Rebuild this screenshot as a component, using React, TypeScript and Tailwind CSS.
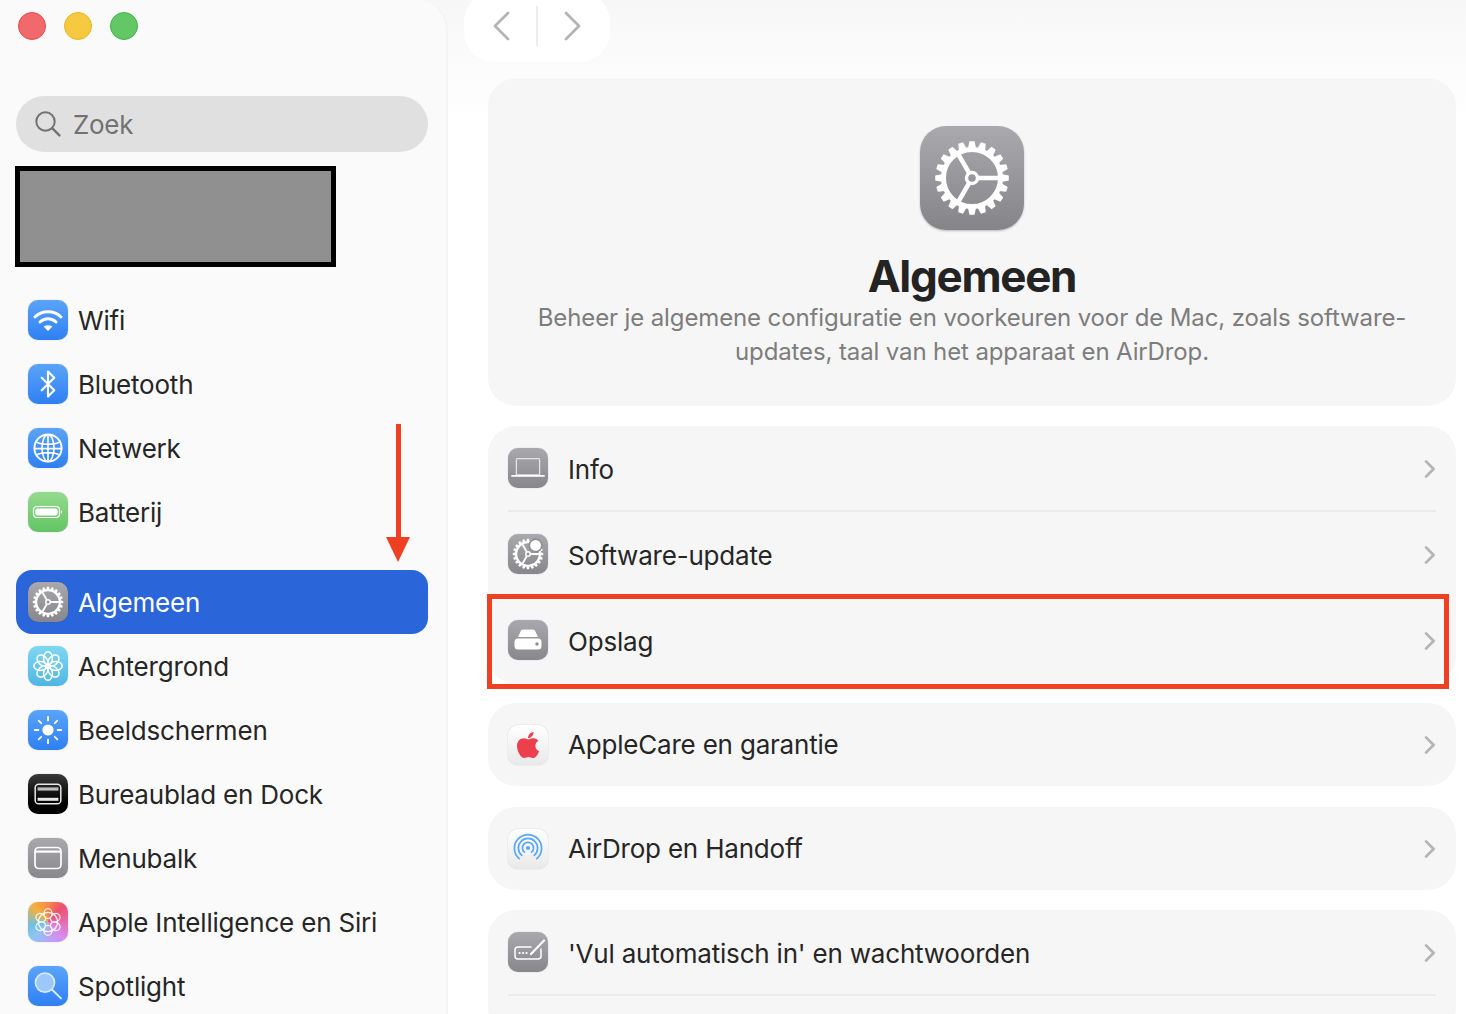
import { ReactNode } from "react";
import { Bluetooth } from "lucide-react";
import { FaApple } from "react-icons/fa";

function Gear({ size, dot = false }: { size: number; dot?: boolean }) {
  const teeth = Array.from({ length: 20 }, (_, i) => i * 18);
  return (
    <svg width={size} height={size} viewBox="0 0 40 40" fill="none" stroke="white">
      {teeth.map((a) => (
        <path key={a} d="M18.9 4 L21.1 4 L22 8.2 L18 8.2 Z" fill="white" stroke="none" transform={`rotate(${a} 20 20)`} />
      ))}
      <circle cx="20" cy="20" r="12.4" strokeWidth="2.2" />
      <circle cx="20" cy="20" r="2.4" strokeWidth="1.5" />
      <path d="M22.4 20H32.4M18.8 17.9 13.8 9.3M18.8 22.1 13.8 30.7" strokeWidth="2" />
      {dot && <circle cx="28" cy="11" r="6.6" fill="white" stroke="#8f8f94" strokeWidth="1.8" />}
    </svg>
  );
}

function Chevron({ dir, className }: { dir: "left" | "right"; className?: string }) {
  return (
    <svg width="14" height="20" viewBox="0 0 14 20" fill="none" stroke="currentColor" strokeWidth="2.7" strokeLinecap="round" strokeLinejoin="round" className={className}>
      <path d={dir === "right" ? "M3 2.4 10.6 10 3 17.6" : "M11 2.4 3.4 10 11 17.6"} />
    </svg>
  );
}

function NavChevron({ dir }: { dir: "left" | "right" }) {
  return (
    <svg width="18" height="30" viewBox="0 0 18 30" fill="none" stroke="currentColor" strokeWidth="2.8" strokeLinecap="round" strokeLinejoin="round">
      <path d={dir === "right" ? "M3 2 16 15 3 28" : "M15 2 2 15 15 28"} />
    </svg>
  );
}

function Tile({ className, children }: { className: string; children: ReactNode }) {
  return (
    <div className={`flex h-10 w-10 shrink-0 items-center justify-center rounded-[10px] shadow-[0_0_1px_rgba(0,0,0,0.35)] ${className}`}>
      {children}
    </div>
  );
}

const blue = "bg-gradient-to-b from-[#5aa4f8] to-[#2f7ff5]";
const gray = "bg-gradient-to-b from-[#a8a8ad] to-[#87878c]";
const pale = "bg-gradient-to-b from-white to-[#e9e9e9]";

const WifiTile = () => (
  <Tile className={blue}>
    <svg width="40" height="40" viewBox="0 0 40 40" fill="none" stroke="white" strokeWidth="3" strokeLinecap="round">
      <path d="M7 17C13.5 10 26.5 10 33 17" />
      <path d="M12 22C16.5 17.6 23.5 17.6 28 22" />
      <path d="M20 31 15.6 26.6C18.2 24.8 21.8 24.8 24.4 26.6Z" fill="white" stroke="none" />
    </svg>
  </Tile>
);

const BluetoothTile = () => (
  <Tile className={blue}>
    <Bluetooth size={30} color="white" strokeWidth={1.7} />
  </Tile>
);

const GlobeTile = () => (
  <Tile className={blue}>
    <svg width="32" height="32" viewBox="0 0 32 32" fill="none" stroke="white" strokeWidth="1.6">
      <circle cx="16" cy="16" r="13.6" strokeWidth="2" />
      <ellipse cx="16" cy="16" rx="6" ry="13.4" />
      <path d="M16 2.6V29.4M4 10C10 13 22 13 28 10M2.6 16.6H29.4M4.4 23C10 19.8 22 19.8 27.6 23" />
    </svg>
  </Tile>
);

const BatteryTile = () => (
  <Tile className="bg-gradient-to-b from-[#96da8f] to-[#62c464]">
    <svg width="32" height="32" viewBox="0 0 32 32" fill="none">
      <rect x="1.5" y="10.5" width="26" height="11" rx="3.4" stroke="white" strokeWidth="1.2" />
      <rect x="3.4" y="12.4" width="22.2" height="7.2" rx="1.8" fill="white" />
      <path d="M29.2 14V18C30.4 17.6 30.4 14.4 29.2 14Z" fill="white" />
    </svg>
  </Tile>
);

const GearTile = ({ dot = false }: { dot?: boolean }) => (
  <Tile className={gray}>
    <Gear size={38} dot={dot} />
  </Tile>
);

const FlowerTile = () => (
  <Tile className="bg-gradient-to-b from-[#7fd7f3] to-[#4fb6e2]">
    <svg width="34" height="34" viewBox="0 0 34 34" fill="none" stroke="white" strokeWidth="1.5">
      {[0, 45, 90, 135, 180, 225, 270, 315].map((a) => (
        <ellipse key={a} cx="17" cy="9.2" rx="4.4" ry="6.4" transform={`rotate(${a} 17 17)`} />
      ))}
      <circle cx="17" cy="17" r="2.2" fill="white" stroke="none" />
    </svg>
  </Tile>
);

const SunTile = () => (
  <Tile className={blue}>
    <svg width="34" height="34" viewBox="0 0 34 34" fill="white" stroke="white" strokeWidth="1.8" strokeLinecap="round">
      <circle cx="17" cy="17" r="5.6" stroke="none" />
      {[0, 45, 90, 135, 180, 225, 270, 315].map((a) => (
        <path key={a} d="M17 3.8V7.4" transform={`rotate(${a} 17 17)`} />
      ))}
    </svg>
  </Tile>
);

const DockTile = () => (
  <Tile className="bg-gradient-to-b from-[#3a3a3a] to-black">
    <svg width="30" height="30" viewBox="0 0 30 30" fill="none">
      <rect x="2.2" y="5.2" width="25.6" height="19.6" rx="3.4" stroke="#e8e8e8" strokeWidth="1.5" />
      <path d="M4.6 8.4H25.4V11.6H4.6Z" fill="#bdbdbd" />
      <path d="M4.6 18.8H25.4V21.8H4.6Z" fill="#e8e8e8" />
    </svg>
  </Tile>
);

const MenuTile = () => (
  <Tile className={gray}>
    <svg width="30" height="30" viewBox="0 0 30 30" fill="none" stroke="white" strokeWidth="1.7">
      <rect x="2" y="4.5" width="26" height="21" rx="3.8" />
      <path d="M2.6 8.6H27.4" strokeWidth="2.2" />
    </svg>
  </Tile>
);

const SiriTile = () => (
  <Tile className="bg-[conic-gradient(from_0deg,#f58a4a,#ee4f6e_12%,#d88cf0_38%,#8fc4f5_62%,#6fc0e0_72%,#f5b13c_88%,#f58a4a)]">
    <svg width="34" height="34" viewBox="0 0 34 34" fill="none" stroke="white" strokeWidth="1.3" opacity="0.9">
      <circle cx="17" cy="17" r="9.6" />
      {[0, 60, 120, 180, 240, 300].map((a) => (
        <ellipse key={a} cx="17" cy="8.6" rx="4" ry="5" transform={`rotate(${a} 17 17)`} />
      ))}
    </svg>
  </Tile>
);

const SpotlightTile = () => (
  <Tile className={blue}>
    <svg width="34" height="34" viewBox="0 0 34 34" fill="none" stroke="#d9ebff" strokeWidth="1.6" strokeLinecap="round">
      <circle cx="14" cy="13.6" r="9.6" fill="#9cc8fb" />
      <path d="M21.2 20.8 30 29.4" strokeWidth="2" />
    </svg>
  </Tile>
);

const LaptopTile = () => (
  <Tile className={gray}>
    <svg width="40" height="40" viewBox="0 0 40 40" fill="none" stroke="white">
      <rect x="8.4" y="10.6" width="23.2" height="16.4" rx="1" strokeWidth="1.3" stroke="#e4e4e4" />
      <path d="M4 27.8H36" strokeWidth="1.8" strokeLinecap="round" />
    </svg>
  </Tile>
);

const DiskTile = () => (
  <Tile className={gray}>
    <svg width="40" height="40" viewBox="0 0 40 40">
      <path d="M10 17 12.6 11.4C13 10.4 14 9.6 15.4 9.6H24.6C26 9.6 27 10.4 27.4 11.4L30 17Z" fill="white" />
      <rect x="6.5" y="18.6" width="27" height="11" rx="3.5" fill="white" />
      <circle cx="29" cy="24" r="1.7" fill="#8f8f94" />
    </svg>
  </Tile>
);

const AppleTile = () => (
  <Tile className={pale}>
    <FaApple size={30} color="#ee3f4c" />
  </Tile>
);

const AirDropTile = () => (
  <Tile className={pale}>
    <svg width="34" height="34" viewBox="0 0 34 34" fill="none" stroke="#5aa7f7" strokeWidth="1.7" strokeLinecap="round">
      <circle cx="17" cy="16" r="2.1" fill="#5aa7f7" stroke="none" />
      <path d="M13.4 20.2A5.6 5.6 0 1 1 20.6 20.2" />
      <path d="M10.8 23.4A9.6 9.6 0 1 1 23.2 23.4" />
      <path d="M8.2 26.6A13.6 13.6 0 1 1 25.8 26.6" />
    </svg>
  </Tile>
);

const PasswordTile = () => (
  <Tile className={gray}>
    <svg width="40" height="40" viewBox="0 0 40 40" fill="none" stroke="white" strokeWidth="1.5" strokeLinecap="round">
      <path d="M23 15H10C8 15 7 16 7 18V24C7 26 8 27 10 27H30C32 27 33 26 33 24V17" />
      <path d="M23 22 36 8.5" strokeWidth="2.2" />
      <path d="M11.5 21H11.6M15 21H15.1M18.5 21H18.6" strokeWidth="2.2" />
    </svg>
  </Tile>
);

function SideRow({ icon, label, active = false }: { icon: ReactNode; label: string; active?: boolean }) {
  return (
    <div className={`flex h-16 items-center gap-2.5 rounded-[16px] pl-3 text-[26px] tracking-[-0.2px] ${active ? "bg-[#2b65da] text-white" : "text-[#262626]"}`}>
      {icon}
      <span>{label}</span>
    </div>
  );
}

function Row({ icon, label, className = "", divider = false, lift = false }: { icon: ReactNode; label: string; className?: string; divider?: boolean; lift?: boolean }) {
  return (
    <div className={`relative flex items-center gap-5 pl-5 pr-[19px] ${className}`}>
      <div className={lift ? "-mt-0.5" : ""}>{icon}</div>
      <span className="flex-1 text-[26px] tracking-[-0.2px] text-[#262626]">{label}</span>
      <Chevron dir="right" className="text-[#b4b4b4]" />
      {divider && <div className="absolute bottom-0 left-5 right-5 h-0.5 bg-[#ebebeb]" />}
    </div>
  );
}

export default function App() {
  return (
    <div className="relative flex h-[1014px] w-[1466px] overflow-hidden bg-gradient-to-b from-[#f7f7f7] to-white to-[12%] font-['Inter',sans-serif]">
      <aside className="h-[1100px] w-[448px] shrink-0 rounded-tr-[30px] border-r-2 border-[#f4f4f4] bg-[#fafafa] px-4">
        <div className="flex h-[96px] items-start gap-[18px] pl-0.5 pt-3">
          <span className="h-7 w-7 rounded-full border border-[#e9474a] bg-[#f2696b]" />
          <span className="h-7 w-7 rounded-full border border-[#eeb420] bg-[#f5ca40]" />
          <span className="h-7 w-7 rounded-full border border-[#3fb34a] bg-[#63c765]" />
        </div>
        <div className="flex h-14 w-[412px] items-center gap-[11px] rounded-[28px] bg-[#e0e0e0] pl-[18px] text-[26px] text-[#727272]">
          <svg width="28" height="28" viewBox="0 0 28 28" fill="none" stroke="currentColor" strokeWidth="2" strokeLinecap="round">
            <circle cx="11.5" cy="11.5" r="9.2" />
            <path d="M18.4 18.4 25.4 25.4" strokeWidth="2.4" />
          </svg>
          <span className="tracking-[-0.3px]">Zoek</span>
        </div>
        <div className="-ml-px mt-3.5 h-[101px] w-[321px] border-[5px] border-black bg-[#909090]" />
        <nav className="mt-[21px] w-[412px]">
          <SideRow icon={<WifiTile />} label="Wifi" />
          <SideRow icon={<BluetoothTile />} label="Bluetooth" />
          <SideRow icon={<GlobeTile />} label="Netwerk" />
          <SideRow icon={<BatteryTile />} label="Batterij" />
          <div className="h-[26px]" />
          <SideRow active icon={<GearTile />} label="Algemeen" />
          <SideRow icon={<FlowerTile />} label="Achtergrond" />
          <SideRow icon={<SunTile />} label="Beeldschermen" />
          <SideRow icon={<DockTile />} label="Bureaublad en Dock" />
          <SideRow icon={<MenuTile />} label="Menubalk" />
          <SideRow icon={<SiriTile />} label="Apple Intelligence en Siri" />
          <SideRow icon={<SpotlightTile />} label="Spotlight" />
        </nav>
      </aside>

      <main className="min-w-0 flex-1">
        <div className="-mt-2 ml-4 flex h-[70px] w-[146px] items-center justify-center gap-[25px] rounded-[30px] bg-white pb-0.5 text-[#b4b4b4]">
          <NavChevron dir="left" />
          <div className="h-10 w-0.5 bg-[#ececec]" />
          <NavChevron dir="right" />
        </div>

        <div className="ml-10 mr-2.5 mt-4 flex flex-col">
          <section className="flex h-[328px] flex-col items-center rounded-[28px] bg-[#f6f6f6] pt-12 text-center">
            <div className="flex h-[104px] w-[104px] items-center justify-center rounded-[26px] bg-gradient-to-b from-[#aaaaae] to-[#858589] shadow-[0_1px_2px_rgba(0,0,0,0.25)]">
              <Gear size={92} />
            </div>
            <h1 className="mt-[21px] text-[44px] font-bold leading-[50px] tracking-[-1.3px] text-[#232323]">Algemeen</h1>
            <p className="w-[900px] text-[24px] leading-[34px] tracking-[-0.12px] text-[#7d7d7d]">
              Beheer je algemene configuratie en voorkeuren voor de Mac, zoals software-
              <br />
              updates, taal van het apparaat en AirDrop.
            </p>
          </section>

          <section className="mt-5 rounded-[28px] bg-[#f6f6f6]">
            <Row lift icon={<LaptopTile />} label="Info" divider className="h-[86px]" />
            <Row lift icon={<GearTile dot />} label="Software-update" className="h-[86px]" />
            <Row lift icon={<DiskTile />} label="Opslag" className="h-[86px]" />
          </section>

          <section className="mt-[19px] rounded-[28px] bg-[#f6f6f6]">
            <Row icon={<AppleTile />} label="AppleCare en garantie" className="h-[83px]" />
          </section>

          <section className="mt-[21px] rounded-[28px] bg-[#f6f6f6]">
            <Row icon={<AirDropTile />} label="AirDrop en Handoff" className="h-[83px]" />
          </section>

          <section className="mt-5 rounded-[28px] bg-[#f6f6f6]">
            <Row lift icon={<PasswordTile />} label="'Vul automatisch in' en wachtwoorden" divider className="h-[86px]" />
            <div className="h-10" />
          </section>
        </div>
      </main>

      {/* annotations on top of the screenshot */}
      <div className="absolute left-[386px] top-[424px] flex flex-col items-center">
        <div className="h-[113px] w-[5px] bg-[#ee4123]" />
        <div className="h-0 w-0 border-x-[12px] border-t-[25px] border-x-transparent border-t-[#ee4123]" />
      </div>
      <div className="absolute left-[487px] top-[594px] h-[95px] w-[962px] border-[5px] border-[#ee4123]" />
    </div>
  );
}
